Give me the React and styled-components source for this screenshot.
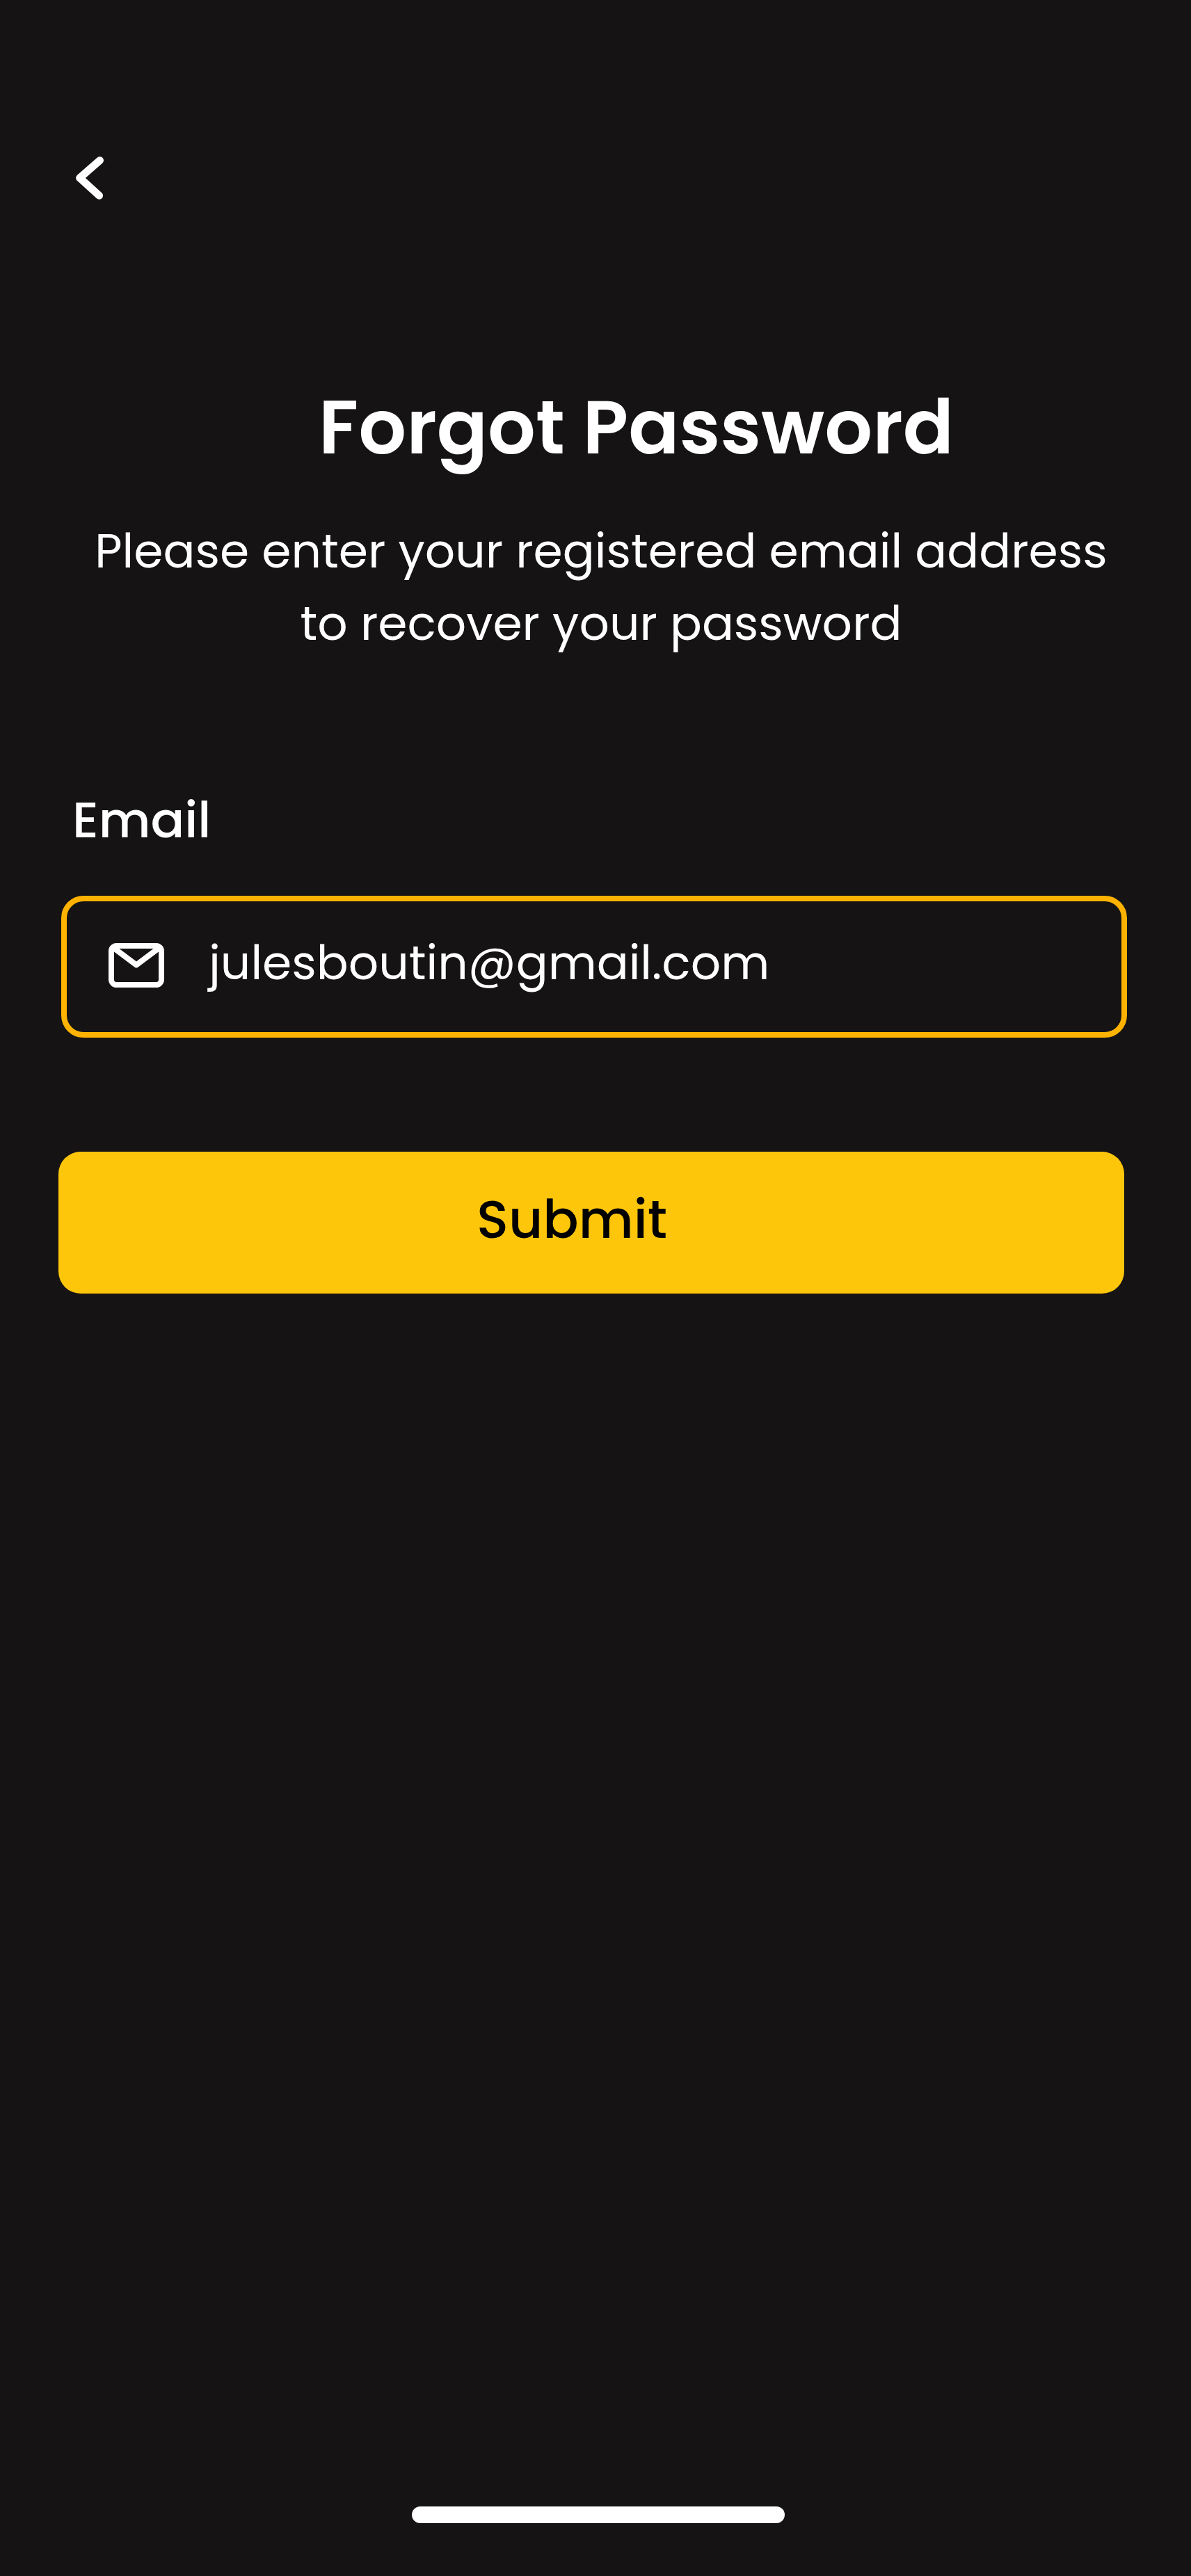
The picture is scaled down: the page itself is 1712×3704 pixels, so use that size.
import React from "react";
import styled, { createGlobalStyle } from "styled-components";

const GlobalStyle = createGlobalStyle`
  *, *::before, *::after { box-sizing: border-box; }
  body { margin: 0; background: #151314; }
`;

const Screen = styled.main`
  display: flex;
  flex-direction: column;
  align-items: flex-start;
  width: 1712px;
  height: 3704px;
  padding: 216px 0 76px;
  background: #151314;
  color: #ffffff;
  font-family: "Poppins", "Inter", "Open Sans", sans-serif;
`;

const BackButton = styled.button`
  display: flex;
  width: 80px;
  height: 80px;
  margin-left: 88px;
  padding: 0;
  border: 0;
  background: none;
  color: inherit;
`;

const Title = styled.h1`
  margin: 236px 0 0 458px;
  font-size: 108px;
  font-weight: 600;
  line-height: 165px;
  white-space: nowrap;
`;

const Description = styled.p`
  width: 1460px;
  margin: 44px 0 0 134px;
  font-size: 68px;
  line-height: 104px;
  text-align: center;
`;

const Label = styled.label`
  margin: 176px 0 0 104px;
  font-size: 72px;
  font-weight: 500;
  line-height: 107px;
`;

const Field = styled.div`
  display: flex;
  align-items: flex-start;
  gap: 64px;
  width: 1532px;
  height: 204px;
  margin: 56px 0 0 88px;
  padding: 37px 60px 0;
  border: 8px solid #ffb300;
  border-radius: 32px;
`;

const MailIcon = styled.svg`
  flex: none;
  width: 80px;
  height: 64px;
  margin-top: 23px;
`;

const FieldValue = styled.span`
  font-size: 68px;
  line-height: 104px;
`;

const SubmitButton = styled.button`
  display: flex;
  align-items: flex-start;
  width: 1532px;
  height: 204px;
  margin: 164px 0 0 84px;
  padding: 41px 0 0 601px;
  border: 0;
  border-radius: 32px;
  background: #fec60b;
  color: #000000;
  font-family: inherit;
  font-size: 76px;
  font-weight: 500;
  line-height: 113px;
`;

const HomeIndicator = styled.div`
  width: 536px;
  height: 24px;
  margin: auto 0 0 592px;
  border-radius: 12px;
  background: #ffffff;
`;

export default function App() {
  return (
    <>
      <GlobalStyle />
      <Screen>
        <BackButton aria-label="Back">
          <svg width="80" height="80" viewBox="0 0 80 80" fill="none" stroke="currentColor" strokeWidth="11" strokeLinecap="round" strokeLinejoin="round">
            <path d="M55.5 14.7 26.6 39.8 54.6 65.2" />
          </svg>
        </BackButton>
        <Title>Forgot Password</Title>
        <Description>
          Please enter your registered email address
          <br />
          to recover your password
        </Description>
        <Label>Email</Label>
        <Field>
          <MailIcon viewBox="0 0 80 64" fill="none" stroke="currentColor" strokeWidth="8" strokeLinejoin="round">
            <rect x="4" y="4" width="72" height="56" rx="7.5" />
            <path d="M6 6 40 31.5 74 6" />
          </MailIcon>
          <FieldValue>julesboutin@gmail.com</FieldValue>
        </Field>
        <SubmitButton>Submit</SubmitButton>
        <HomeIndicator />
      </Screen>
    </>
  );
}
